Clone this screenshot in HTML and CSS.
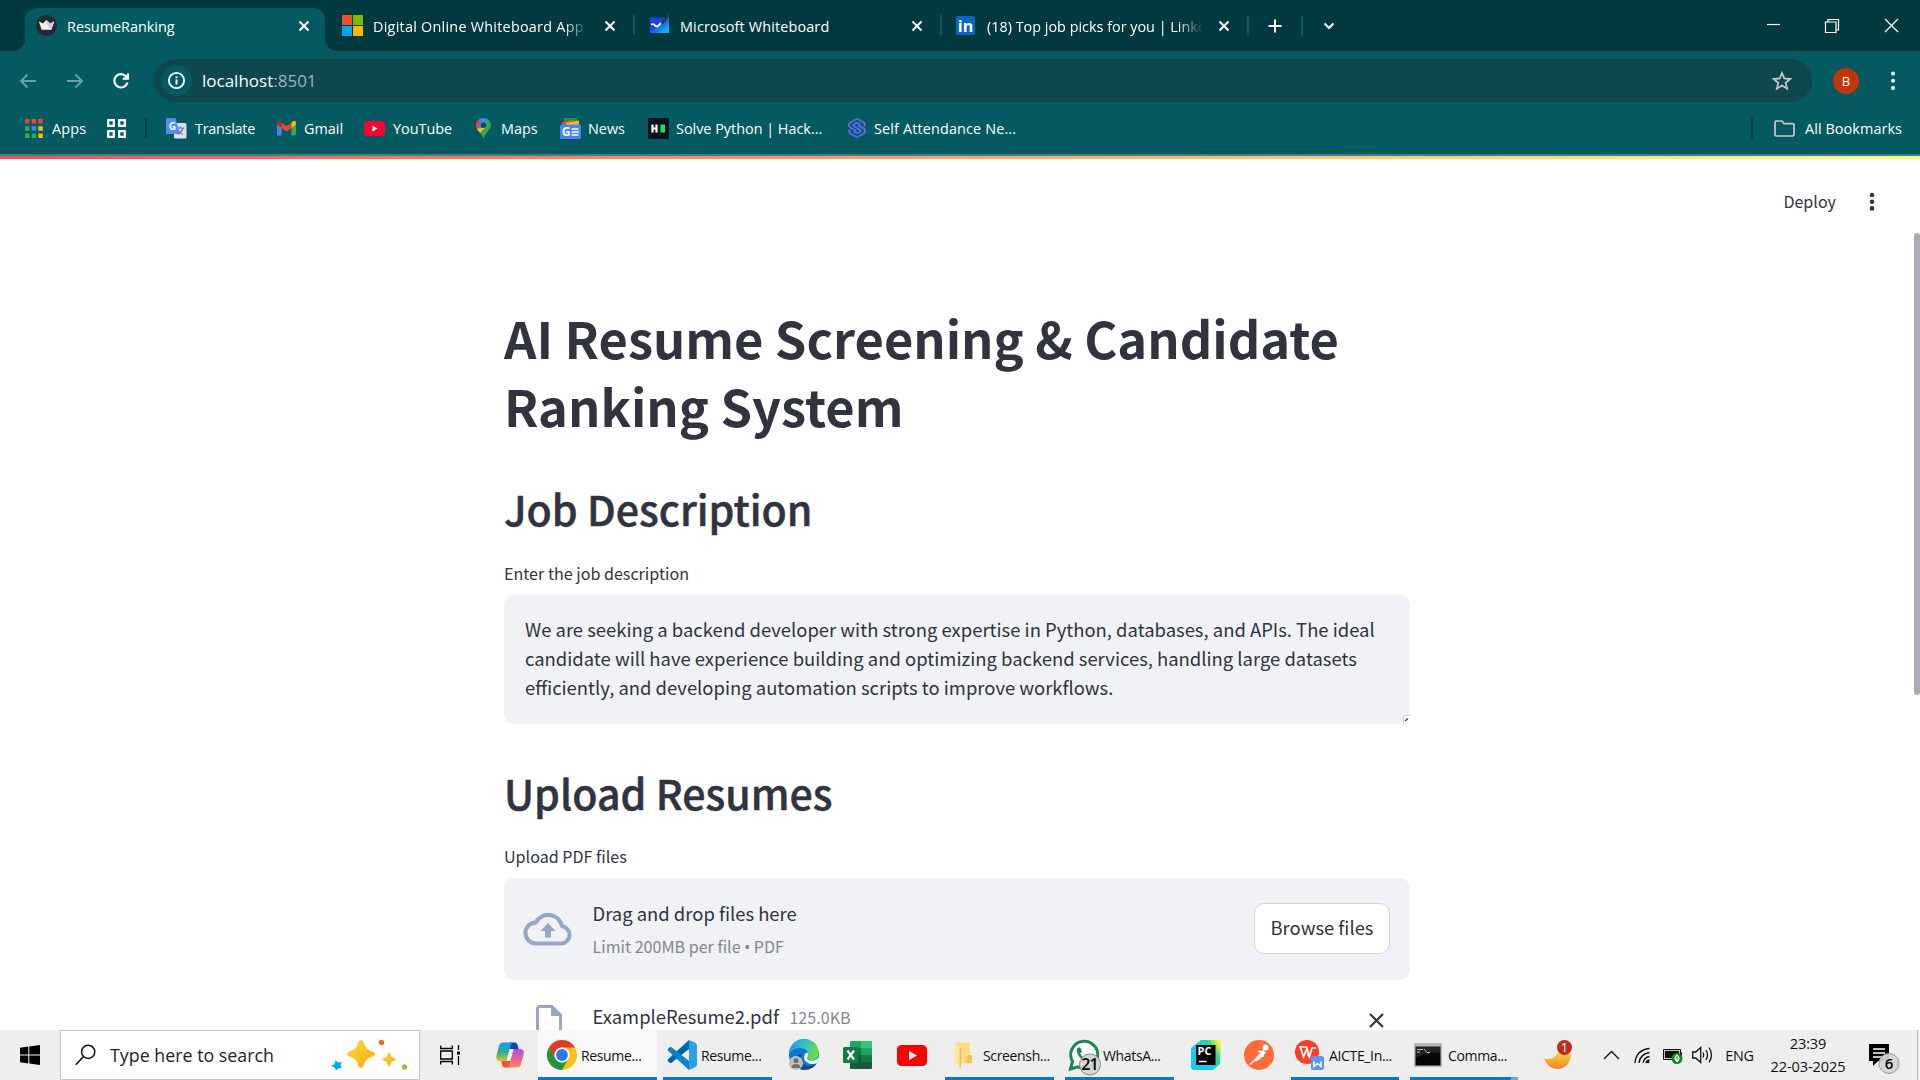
FILE: index.html
```html
<!DOCTYPE html>
<html lang="en">
<head>
<meta charset="utf-8">
<title>ResumeRanking</title>
<link rel="stylesheet" href="styles.css">
</head>
<body>
<div class="screen">

<header class="tabstrip">
  <div class="tab tab-active">
    <svg class="favicon" width="21" height="21" viewBox="0 0 21 21"><circle cx="10.5" cy="10.5" r="10.5" fill="#262730"/><path d="M2.8 6.2 6.8 8.600 10.500 5l3.700 3.600 4-2.400-2.800 8.600H5.600z" fill="#f4f4f4"/><path d="M10.500 5 14.200 8.600 18.200 6.200 15.400 14.800 10.500 9z" fill="#cfcfd2"/></svg>
    <span class="tab-title">ResumeRanking</span>
    <svg class="tab-close" width="12" height="12" viewBox="0 0 12 12"><path d="M1.5 1.5l9 9M10.5 1.5l-9 9"/></svg>
  </div>
  <div class="tab">
    <svg class="favicon" width="21" height="21" viewBox="0 0 21 21"><path fill="#f25022" d="M0 0h10v10H0z"/><path fill="#7fba00" d="M11 0h10v10H11z"/><path fill="#00a4ef" d="M0 11h10v10H0z"/><path fill="#ffb900" d="M11 11h10v10H11z"/></svg>
    <span class="tab-title fade fade-app">Digital Online Whiteboard App</span>
    <svg class="tab-close" width="12" height="12" viewBox="0 0 12 12"><path d="M1.5 1.5l9 9M10.5 1.5l-9 9"/></svg>
  </div>
  <div class="tab">
    <svg class="favicon" width="21" height="21" viewBox="0 0 21 21"><defs><linearGradient id="wb" x1="0" y1="0" x2="1" y2="1"><stop offset=".4" stop-color="#0f45f0"/><stop offset=".8" stop-color="#18a8e8"/></linearGradient></defs><path d="M1 2.500h19v15.500H1z" fill="url(#wb)"/><path d="M2 9.500q2.500-1 3.500.500t3 1.500L12 8" fill="none" stroke="#fff" stroke-width="1.800"/><path d="M13 8.500 19.500 0" stroke="#33383c" stroke-width="2.800"/></svg>
    <span class="tab-title tab-wb">Microsoft Whiteboard</span>
    <svg class="tab-close" width="12" height="12" viewBox="0 0 12 12"><path d="M1.5 1.5l9 9M10.5 1.5l-9 9"/></svg>
  </div>
  <div class="tab">
    <svg class="favicon favicon-in" width="21" height="21" viewBox="0 0 21 21"><rect x="1" y="1" width="19" height="19" rx="2" fill="#0a66c2"/><text x="10.500" y="16.500" text-anchor="middle" class="in-logo">in</text></svg>
    <span class="tab-title fade">(18) Top job picks for you | Linke</span>
    <svg class="tab-close" width="12" height="12" viewBox="0 0 12 12"><path d="M1.5 1.5l9 9M10.5 1.5l-9 9"/></svg>
  </div>
  <svg class="new-tab" width="14" height="14" viewBox="0 0 14 14"><path d="M7 .5v13M.5 7h13"/></svg>
  <i class="strip-sep"></i>
  <svg class="tab-search" width="12" height="8" viewBox="0 0 12 8"><path d="M1.500 1.500 6 6l4.500-4.500"/></svg>
  <div class="window-buttons">
    <svg width="15" height="15" viewBox="0 0 15 15"><path d="M1 6.500h13"/></svg>
    <svg width="15" height="15" viewBox="0 0 15 15"><path d="M.5 4h10.500v10.500H.5zM3 4V1.500h10.500V12H11"/></svg>
    <svg width="15" height="15" viewBox="0 0 15 15"><path d="M1 1l13 13M14 1 1 14"/></svg>
  </div>
</header>

<div class="toolbar">
  <svg class="nav dim" width="18" height="16" viewBox="0 0 18 16"><path d="M17 8H2M8.500 1.500 2 8l6.500 6.500"/></svg>
  <svg class="nav dim" width="18" height="16" viewBox="0 0 18 16"><path d="M1 8h15M9.500 1.500 16 8l-6.500 6.500"/></svg>
  <svg class="nav reload" width="18" height="18" viewBox="0 0 18 18"><path d="M15.500 10.500A6.700 6.700 0 1 1 14 4.300l1.500 1.900M16 1.500v5.200h-5.200"/></svg>
  <div class="omnibox">
    <span class="site-info"><svg width="19" height="19" viewBox="0 0 19 19"><circle cx="9.500" cy="9.500" r="7.600"/><path d="M9.500 8.500v5M9.500 5.200v2"/></svg></span>
    <span class="url">localhost<span class="port">:8501</span></span>
    <svg class="star" width="20" height="20" viewBox="0 0 20 20"><path d="M10 2l2.300 5.500 6 .5-4.600 3.900 1.400 5.800L10 14.600l-5.100 3.100 1.400-5.800L1.700 8l6-.5z"/></svg>
  </div>
  <span class="avatar">B</span>
  <svg class="menu-dots" width="6" height="22" viewBox="0 0 6 22"><circle cx="3" cy="3.500" r="2"/><circle cx="3" cy="10.800" r="2"/><circle cx="3" cy="18" r="2"/></svg>
</div>

<nav class="bookmarks">
  <a class="bm bm-apps"><svg width="18" height="19" viewBox="0 0 18 19"><g fill="#ea4335"><path d="M0 0h4.500v4.500H0zM6.700 0h4.500v4.500H6.700zM13.300 0h4.500v4.500h-4.500z"/></g><path fill="#34a853" d="M0 7.200h4.500v4.500H0zM0 14.400h4.500v4.500H0zM6.700 14.400h4.500v4.500H6.700z"/><path fill="#4285f4" d="M6.700 7.200h4.500v4.500H6.700z"/><path fill="#fbbc04" d="M13.300 7.200h4.500v4.500h-4.500zM13.300 14.400h4.500v4.500h-4.500z"/></svg>Apps</a>
  <svg class="bm-grid" width="19" height="19" viewBox="0 0 19 19"><path d="M1.200 1.200h5.600v5.600H1.200zM12.200 1.200h5.600v5.600h-5.600zM1.200 12.200h5.600v5.600H1.200zM12.200 12.200h5.600v5.600h-5.600z"/></svg>
  <i class="bm-sep"></i>
  <a class="bm bm-translate"><svg width="21" height="21" viewBox="0 0 21 21"><rect x="8" y="5" width="12.500" height="15.500" rx="1.500" fill="#dfe3e8"/><path d="M10.500 10h8M14.500 8.500V10M17 10q-1 4-5 6.500M12 12.500q2 3 5 4" stroke="#607d8b" stroke-width="1.200" fill="none"/><path d="M1.500 0h8l4.500 16H1.500Q0 16 0 14.500v-13Q0 0 1.500 0z" fill="#4d8df6"/><text x="6.300" y="11.500" text-anchor="middle" class="g-logo">G</text></svg>Translate</a>
  <a class="bm bm-gmail"><svg width="19" height="16" viewBox="0 0 19 16"><path d="M0 3v11q0 1.500 1.500 1.500h3V6z" fill="#4285f4"/><path d="M19 3v11q0 1.500-1.500 1.500h-3V6z" fill="#34a853"/><path d="M0 3v1.500L4.500 8V2.500L3 1.200Q.500 0 0 3z" fill="#c5221f"/><path d="M4.500 2.500 9.500 6.300l5-3.800V8l-5 3.800-5-3.800z" fill="#ea4335"/><path d="M19 3v1.500L14.500 8V2.500L16 1.200Q18.500 0 19 3z" fill="#fbbc04"/></svg>Gmail</a>
  <a class="bm bm-youtube"><svg width="21" height="15" viewBox="0 0 21 15"><rect width="21" height="15" rx="3.500" fill="#f03"/><path d="M8.500 4.500v6l5-3z" fill="#fff"/></svg>YouTube</a>
  <a class="bm bm-maps"><svg width="15" height="21" viewBox="0 0 15 21"><path d="M7.500 0A7.300 7.300 0 0 0 .2 7.300Q.2 10 2.300 12.500 6.500 17 7.500 20.500q1-3.500 5-8 2.300-2.500 2.300-5.200A7.300 7.300 0 0 0 7.500 0z" fill="#34a853"/><path d="M.2 7.500Q.2 10 2.300 12.500L12.500 2Q10 0 7.500 0A7.300 7.300 0 0 0 .2 7.500z" fill="#4285f4"/><path d="M2 2.600 5.500 5.500.8 10.500Q-1 6 2 2.600z" fill="#ea4335"/><path d="M1 10.400 9.500 9.500 4 14.800Q1.500 12 1 10.400z" fill="#fbbc04"/><circle cx="7.500" cy="7.300" r="2.700" fill="#0b4e60"/></svg>Maps</a>
  <a class="bm bm-news"><svg width="21" height="21" viewBox="0 0 21 21"><path d="M4 0h13v8H4z" fill="#0c9d58"/><path d="M1.500 4 14 1.500 16 8H2.500z" fill="#ea4335"/><path d="M6 5 19 2.500V9H6z" fill="#ffc107"/><rect y="6.500" width="21" height="14.500" rx="1.500" fill="#4285f4"/><text x="6" y="18" text-anchor="middle" class="g-logo g-news">G</text><path d="M11.500 11h7M11.500 14h7.500M11.500 17h7" stroke="#fff" stroke-width="1.600"/></svg>News</a>
  <a class="bm bm-hr"><svg width="21" height="21" viewBox="0 0 21 21"><path d="M0 0h21v21H0z" fill="#0e141e"/><path d="M4.500 6.500v8M8.500 6.500v8M4 10.500h5" stroke="#fff" stroke-width="2.200"/><path d="M12.500 6.500H17v8h-4.500z" fill="#1be05f"/></svg>Solve Python | Hack...</a>
  <a class="bm bm-self"><svg width="18" height="20" viewBox="0 0 18 20"><g fill="none" stroke="#5b66e8" stroke-width="2"><path d="M15.800 8.500Q18 6 15.300 4.200L10.500 1.500q-1.500-.9-3 0L2.700 4.300Q0 6 1.200 8.200 1.700 9 3 9.800l5 3"/><path d="M2.200 11.500Q0 14 2.700 15.800l4.800 2.700q1.500.9 3 0l4.800-2.800q2.700-1.700 1.500-3.900-.5-.8-1.800-1.600l-5-3"/><path d="M12.500 6.800 9.800 5q-.8-.5-1.600 0L6 6.300q-1.300.9 0 1.800l6 3.800q1.300.9 0 1.800L9.800 15q-.8.500-1.600 0l-2.700-1.800"/></g></svg>Self Attendance Ne...</a>
  <i class="bm-sep bm-sep-end"></i>
  <a class="bm bm-all"><svg width="21" height="17" viewBox="0 0 21 17"><path d="M1 14.500v-12Q1 1 2.500 1H8l2.200 2.700h8.300Q20 3.700 20 5v9.500q0 1.500-1.500 1.500h-16Q1 16 1 14.500z" fill="none" stroke="#c9cdd0" stroke-width="1.700"/></svg>All Bookmarks</a>
</nav>

<main class="app">
  <div class="decoration"></div>
  <div class="app-header"><span>Deploy</span><svg width="6" height="20" viewBox="0 0 6 20"><circle cx="3" cy="3" r="2.300"/><circle cx="3" cy="9.700" r="2.300"/><circle cx="3" cy="16.400" r="2.300"/></svg></div>
  <div class="app-body">
    <section class="content">
      <h1>AI Resume Screening &amp; Candidate<br>Ranking System</h1>
      <h2>Job Description</h2>
      <p class="label">Enter the job description</p>
      <div class="textarea">We are seeking a backend developer with strong expertise in Python, databases, and APIs. The ideal<br>candidate will have experience building and optimizing backend services, handling large datasets<br>efficiently, and developing automation scripts to improve workflows.<svg class="grip" width="7" height="8" viewBox="0 0 7 8"><path d="M0 0h7v4L4 8H0z" fill="#fff"/><path d="M.5 8V.5H7" fill="none" stroke="#d3d4d8"/><path d="M2 6 5 3.500" stroke="#444" stroke-width="1.500"/></svg></div>
      <h2>Upload Resumes</h2>
      <p class="label label-upload">Upload PDF files</p>
      <div class="dropzone">
        <svg class="cloud" width="48" height="34" viewBox="0 0 48 34"><path d="M38 14.200A14 14 0 0 0 11.800 10.500 10.500 10.500 0 0 0 12 31.500h25.500a8.700 8.700 0 0 0 .5-17.300z" fill="none" stroke="#97a6c6" stroke-width="4" stroke-linejoin="round"/><path d="M24 11 31.500 19H27v6.500h-6V19h-4.500z" fill="#97a6c6"/></svg>
        <div class="drop-text"><div>Drag and drop files here</div><small>Limit 200MB per file <b>•</b> PDF</small></div>
        <span class="browse">Browse files</span>
      </div>
      <div class="file">
        <svg class="file-icon" width="26" height="32" viewBox="0 0 26 32"><path d="M1.500 30V4Q1.500 1.500 4 1.500h12L24.500 10v20" fill="none" stroke="#97a6c6" stroke-width="3"/><path d="M15 1v10h10V9L17 1z" fill="#97a6c6"/></svg>
        <span class="file-name">ExampleResume2.pdf</span><small>125.0KB</small>
        <svg class="file-x" width="17" height="17" viewBox="0 0 17 17"><path d="M2 2l13 13M15 2 2 15"/></svg>
      </div>
    </section>
    <div class="scrollbar"></div>
  </div>
</main>

<footer class="taskbar">
  <div class="cell"><svg width="20" height="20" viewBox="0 0 20 20"><path d="M0 2.800 8.300 1.600v7.900H0zM9.300 1.500 20 0v9.500H9.300zM0 10.500h8.300v7.900L0 17.200zM9.300 10.500H20V20L9.300 18.500z"/></svg></div>
  <div class="search">
    <svg width="21" height="22" viewBox="0 0 21 22"><circle cx="13.200" cy="7.800" r="6.600" fill="none" stroke="#111" stroke-width="1.500"/><path d="M8.500 12.500 .8 20.800" stroke="#111" stroke-width="1.600"/></svg>
    <span>Type here to search</span>
    <svg class="sparkles" width="76" height="32" viewBox="0 0 76 32"><defs><linearGradient id="gold" x1="0" y1="0" x2="1" y2="1"><stop offset="0" stop-color="#ffd83a"/><stop offset="1" stop-color="#f5ac12"/></linearGradient></defs><path d="M30 1q2.500 0 4 6 1.500 3.500 5 4.500 5 1.700 5 3.500t-5 3.500q-3.500 1-5 4.500-1.500 6-4 6t-4-6q-1.500-3.500-5-4.500-5-1.700-5-3.500t5-3.500q3.500-1 5-4.500 1.500-6 4-6z" fill="url(#gold)"/><path d="M58 13q2 1 2.500 5 3.500 1 4.500 2.500-1 1.500-4.500 2-1 3.500-2.500 5-1.500-1.500-2.300-5-3.700-.5-4.700-2 1-1.500 4.700-2.500Q56.500 14 58 13z" fill="url(#gold)"/><path d="M4.500 21l2.500 2.500 3.500-.5-1 3.500 1 2.500-3.500.5-2 2-1.500-3-3.500-1.500 3.500-2z" fill="#00a9ea"/><circle cx="50.500" cy="3.500" r="2.700" fill="#f26522"/><circle cx="73.500" cy="28" r="2.700" fill="#8cc63f"/></svg>
  </div>
  <div class="cell"><svg width="20" height="20" viewBox="0 0 20 20"><path d="M.7.500V3.500h11.600V.500M.7 19.500v-3h11.600v3M.7 6h11.600v8H.7zM18.500 0v5M18.500 11v9" fill="none" stroke="#000" stroke-width="1.300"/><path d="M17 6.500h3v3h-3z"/></svg></div>
  <div class="cell copilot"><svg width="28" height="26" viewBox="0 0 28 26"><defs><linearGradient id="cpa" x1="0" y1="0" x2="0" y2="1"><stop offset="0" stop-color="#1a9be8"/><stop offset=".5" stop-color="#1faf9a"/><stop offset="1" stop-color="#e3c323"/></linearGradient><linearGradient id="cpb" x1="0" y1="0" x2="0" y2="1"><stop offset="0" stop-color="#a64fe0"/><stop offset=".5" stop-color="#ee5da0"/><stop offset="1" stop-color="#f98b55"/></linearGradient></defs><path d="M13 .5h6q2 0 3 4l.8 2.500h-9z" fill="#1443b8"/><path d="M14 25.500H9q-2.500 0-3.200-4L5 19h10z" fill="#f2562e"/><path d="M6.500.500h11q-2 0-3 3.500L10.300 19H4Q-.5 19 .3 14L3 4Q4 .5 6.500.5z" fill="url(#cpa)"/><path d="M21.500 25.500h-11q2 0 3-3.500L17.700 7H24q4.500 0 3.700 5L25 22q-1 3.500-3.500 3.500z" fill="url(#cpb)"/></svg></div>
  <div class="app-btn active"><svg width="30" height="30" viewBox="0 0 30 30"><circle cx="15" cy="15" r="15" fill="#fbc116"/><path d="M2 7.500A15 15 0 0 1 28 7.500H15A7.500 7.500 0 0 0 8.500 18.800z" fill="#dd3b2e"/><path d="M2 7.500A15 15 0 0 0 15 30l6.500-11.200A7.500 7.500 0 0 1 8.500 18.800z" fill="#229344"/><circle cx="15" cy="15" r="7.500" fill="#fff"/><circle cx="15" cy="15" r="5.900" fill="#2b78f0"/></svg><span>Resume...</span></div>
  <div class="app-btn vs"><svg width="30" height="30" viewBox="0 0 30 30"><path d="M22 0 1 19.200q-1 1 0 2l1.600 1.500q1 .8 2 0L22 9z" fill="#0065a9"/><path d="M22 30 1 10.800q-1-1 0-2l1.600-1.500q1-.8 2 0L22 21z" fill="#0e7fc9"/><path d="M22 0l6.500 3Q30 4 30 5.500v19q0 1.500-1.500 2.500L22 30q-1-1 0-2z" fill="#27a3ee"/></svg><span>Resume...</span></div>
  <div class="cell"><svg width="30" height="30" viewBox="0 0 30 30"><defs><linearGradient id="edge" x1="0" y1="0" x2="1" y2=".3"><stop offset="0" stop-color="#1f8ce0"/><stop offset=".5" stop-color="#2cc0d3"/><stop offset="1" stop-color="#67db4c"/></linearGradient></defs><circle cx="15" cy="15" r="15" fill="#1374cf"/><path d="M0 14.500A15 15 0 0 1 30 13q0 6-6 7-5 .7-5.500-2 2-2 .5-5.500Q16.500 7.500 9.500 8 2.500 8.600 0 14.500z" fill="url(#edge)"/><path d="M12 14q-2.500 9 6 12 5 1 10-3-4 7-13 7Q6 29 6 21q.5-5.500 6-7z" fill="#114a8c"/><path d="M15 16.500q1-5 4-3.500 1.200 3-.8 5 .3 3 5.800 2.500 4-.5 6.500-3.500 0 3-1.500 5.500-5 2.500-9 1Q14.500 21.500 15 16.500z" fill="#ededed"/><circle cx="7" cy="23" r="7" fill="#bfc0c1"/><circle cx="7" cy="20.500" r="2.600" fill="#6e7072"/><path d="M2.500 28q0-4 4.500-4t4.500 4z" fill="#6e7072"/></svg></div>
  <div class="cell excel"><svg width="29" height="28" viewBox="0 0 29 28"><rect x="7" width="22" height="28" rx="1.500" fill="#21a366"/><path d="M7 7h11v14H7z" fill="#107c41"/><path d="M18 0h9.500Q29 0 29 1.500V7H18z" fill="#33c481"/><path d="M7 14h11v7H7z" fill="#185c37"/><path d="M7 21h22v5.500q0 1.500-1.500 1.500h-19Q7 28 7 26.500z" fill="#185c37"/><path d="M18 14h11v7H18z" fill="#107c41"/><rect y="6" width="15.500" height="16" rx="1.500" fill="#107c41"/><path d="M4.500 9.500l6.500 9M11 9.500l-6.500 9" stroke="#fff" stroke-width="2.200"/></svg></div>
  <div class="cell"><svg width="30" height="21" viewBox="0 0 30 21"><rect width="30" height="21" rx="4.500" fill="#f00"/><path d="M12 6v9l8-4.500z" fill="#fff"/></svg></div>
  <div class="app-btn explorer"><svg width="20" height="28" viewBox="0 0 20 28"><path d="M2 1.500h14v21H2z" fill="#fbdc85"/><path d="M14 14h4v8h-6z" fill="#eec35d"/><path d="M0 1 6.500 7v20L0 22z" fill="#ffe9a5"/><path d="M5.500 7 7 6v20l-1.500 1.500z" fill="#eac25f"/></svg><span>Screensh...</span></div>
  <div class="app-btn whatsapp"><svg width="34" height="36" viewBox="0 0 34 36"><path d="M1.500 29l2-7.500A13.500 13.500 0 1 1 9 26.800z" fill="#fff" stroke="#1b8755" stroke-width="3"/><path d="M8 9q1.500-3 3.500-1l1.300 3.300q0 1-1.600 2.200 2.300 4.500 6.500 5.500 2-2.500 3-2l3 1.600q.7 3-3 4Q17 23.500 11.500 18 6.700 13 8 9z" fill="#1b8755"/><circle cx="21" cy="24.500" r="10.500" fill="#d6d6d6" fill-opacity=".93" stroke="#858585"/><text x="20.500" y="30" text-anchor="middle" class="badge-21">21</text></svg><span>WhatsA...</span></div>
  <div class="cell"><svg width="30" height="30" viewBox="0 0 30 30"><defs><linearGradient id="pc" x1="0" y1=".6" x2="1" y2="0"><stop offset=".3" stop-color="#12cdf5"/><stop offset=".65" stop-color="#25d79b"/><stop offset=".9" stop-color="#f5ee35"/></linearGradient></defs><path d="M10 0 28 0 30 2 29 24 22 30H2L0 28V8z" fill="url(#pc)"/><path d="M5 5h19.500v20H5z" fill="#000"/><path d="M8 21.500h7.500" stroke="#fff" stroke-width="1.500"/><text x="13.500" y="14.500" text-anchor="middle" class="pc-logo">PC</text></svg></div>
  <div class="cell postman"><svg width="30" height="30" viewBox="0 0 30 30"><circle cx="15" cy="15" r="15" fill="#ff6c37"/><circle cx="21.500" cy="7.500" r="3" fill="#fff"/><path d="M19 10l3 2.500L15 20l-4.500 1.500 1-3.500z" fill="#fff"/><path d="M12 19l-6 5.500M14 11.500h5M20 12l-1.500 5" stroke="#fff" stroke-width="1.500"/></svg></div>
  <div class="app-btn wps"><svg width="30" height="30" viewBox="0 0 30 30"><circle cx="12" cy="12" r="12" fill="#fc3f22"/><path d="M4 7h7.500l3 9.500L17 8h4M5.500 7.500 8.500 17l3-7.500M14 17l-1.500-4" fill="none" stroke="#fff" stroke-width="1.700"/><rect x="16" y="16" width="13" height="14" rx="2.500" fill="#5a93fa"/><path d="M19 21.500v5l3.500-3 3.500 3v-5" fill="none" stroke="#fff" stroke-width="1.600"/></svg><span>AICTE_In...</span></div>
  <div class="app-btn cmd"><svg width="28" height="24" viewBox="0 0 28 24"><rect width="28" height="24" rx="1" fill="#b3bac2"/><path d="M1.500 3.500h25v19h-25z" fill="#070707"/><path d="M3 6.500h6M3 9h3M10 6l3 3.500h3" fill="none" stroke="#bbb" stroke-width="1"/><path d="M1.500 3.500h25v6q-14 0-25 5z" fill="#fff" fill-opacity=".12"/></svg><span>Comma...</span></div>
  <div class="cell"><svg width="30" height="30" viewBox="0 0 30 30"><defs><linearGradient id="moon" x1="0" y1="0" x2="0" y2="1"><stop offset=".4" stop-color="#fbc53c"/><stop offset="1" stop-color="#ef8220"/></linearGradient></defs><path d="M1 18.500q7 2 12-3 3.500-4 3-9 4-1 7 1 6 4 4.500 11-2.500 9-12 10.500Q5 29.500 1 18.500z" fill="url(#moon)"/><circle cx="21.500" cy="7.500" r="7.500" fill="#c42b1c"/><text x="21.500" y="12.300" text-anchor="middle" class="badge-1">1</text></svg></div>
  <div class="cell"><svg width="17" height="10" viewBox="0 0 17 10"><path d="M1 9l7.500-7.500L16 9" class="tray"/></svg></div>
  <div class="cell wifi"><svg width="17" height="17" viewBox="0 0 17 17"><path d="M1 16Q2 3 15.500 1.500M5 16Q6 7 15.500 5.500M9 16q1-5.500 6.500-6.500" class="tray"/><path d="M12 16q.5-2.500 3.500-3" class="tray"/><circle cx="14" cy="15" r="1.300"/></svg></div>
  <div class="cell battery"><svg width="20" height="18" viewBox="0 0 20 18"><path d="M1 4h16v9H1z" fill="#111" stroke="#fff" stroke-width="1.500"/><path d="M.5 3.500h17v10H.5zM18.500 6.500v4" fill="none" stroke="#111"/><circle cx="14" cy="12.500" r="5.500" fill="#108a1e"/><path d="M14 9q-4 3.500 0 6.500 4-3 0-6.500zM14 11.500v4.500" fill="none" stroke="#fff" stroke-width="1.200"/></svg></div>
  <div class="cell volume"><svg width="21" height="18" viewBox="0 0 21 18"><path d="M.7 6h3l5-4.500v15l-5-4.500h-3zM11 6.500q1.500 2.500 0 5M14 4q3 5 0 10M17 1.500q5 7.500 0 15" class="tray"/></svg></div>
  <div class="cell lang">ENG</div>
  <div class="clock"><span>23:39</span><span>22-03-2025</span></div>
  <div class="cell notif"><svg width="31" height="31" viewBox="0 0 31 31"><path d="M0 0h20v17H9l-5 5v-5H0z"/><path d="M4 5h12M4 9h12M4 13h12" stroke="#fff" stroke-width="1.300"/><circle cx="20" cy="19.500" r="10" fill="#d4d4d4" fill-opacity=".94" stroke="#999"/><text x="20" y="25" text-anchor="middle" class="badge-6">6</text></svg></div>
  <div class="show-desktop"></div>
</footer>
</div>
</body>
</html>
```
FILE: styles.css
```css
* { box-sizing: border-box; }
body { margin: 0; font-family: "Open Sans", sans-serif; }
svg { display: block; flex: none; overflow: visible; }
.screen { width: 1920px; height: 1080px; display: flex; flex-direction: column; overflow: hidden; background: #fff; }

/* Tab strip */
.tabstrip { height: 51px; flex: none; display: flex; align-items: center; background: #02393e; color: #fff; font-size: 14.4px; padding-left: 25px; }
.tab { position: relative; width: 307px; height: 51px; display: flex; align-items: center; padding: 0 23px 0 10px; }
.tab-active { width: 300px; height: 43px; align-self: flex-end; padding: 0 15px 8px 11px; margin-right: 7px; background: #045a60; border-radius: 12px 12px 0 0; }
.tab-active::before, .tab-active::after { content: ""; position: absolute; bottom: 0; width: 12px; height: 12px; }
.tab-active::before { left: -12px; background: radial-gradient(circle at 0 0, transparent 11.5px, #045a60 12.5px); }
.tab-active::after { right: -12px; background: radial-gradient(circle at 100% 0, transparent 11.5px, #045a60 12.5px); }
.tab:not(.tab-active)::after { content: ""; position: absolute; right: 4px; top: 15px; width: 2px; height: 20px; background: #045a60; }
.tab-title { flex: 1; min-width: 0; margin: 1px 0 0 10px; white-space: nowrap; }
.tab-wb { letter-spacing: .15px; }
.fade { margin-right: 15px; -webkit-mask-image: linear-gradient(90deg, #000 190px, transparent 216px); mask-image: linear-gradient(90deg, #000 190px, transparent 216px); }
.fade-app { letter-spacing: .25px; }
.favicon-in { margin-left: -1px; margin-right: 1px; }
.tab-close path { fill: none; stroke: #fff; stroke-width: 2; }
.new-tab { margin-left: 15px; }
.new-tab path, .tab-search path { fill: none; stroke: #fff; stroke-width: 2; }
.strip-sep { width: 2px; height: 20px; margin-left: 19px; background: #045a60; }
.tab-search { margin-left: 20px; }
.window-buttons { margin-left: auto; display: flex; gap: 44px; padding-right: 21px; }
.window-buttons path { fill: none; stroke: #fff; stroke-width: 1.2; }
.in-logo { font: 700 16px "Open Sans", sans-serif; fill: #fff; }

/* Toolbar */
.toolbar { height: 59px; flex: none; display: flex; align-items: center; background: #045a60; padding: 0 24px 0 19px; }
.nav { margin-right: 29px; }
.nav path { fill: none; stroke: #fff; stroke-width: 1.8; }
.dim path { stroke: #6fa0a4; }
.reload { margin: 0 24px 0 -1px; }
.reload path { stroke-width: 2.2; }
.omnibox { width: 1658px; height: 43px; display: flex; align-items: center; border-radius: 22px; background: #0e484e; padding: 0 20px 0 7px; }
.site-info { width: 31px; height: 31px; display: flex; align-items: center; justify-content: center; border-radius: 50%; background: #045a60; }
.site-info circle, .site-info path { fill: none; stroke: #fff; stroke-width: 1.9; }
.url { margin-left: 10px; font-size: 17px; color: #fff; flex: 1; }
.port { color: #9db3b5; }
.star path { fill: none; stroke: #c3c7c8; stroke-width: 1.8; }
.avatar { width: 26px; height: 26px; margin-left: 21px; border-radius: 50%; background: #bf360c; color: #fff; font-size: 13px; line-height: 26px; text-align: center; }
.menu-dots { margin-left: auto; fill: #fff; }

/* Bookmarks */
.bookmarks { height: 46px; flex: none; display: flex; align-items: center; background: #045a60; border-bottom: 2px solid #3d8086; color: #fff; font-size: 14.4px; padding: 0 18px 8px 25px; }
.bm { display: flex; align-items: center; gap: 8px; white-space: nowrap; }
.bm-apps { width: 82px; gap: 9px; letter-spacing: .2px; }
.bm-grid path { fill: none; stroke: #fff; stroke-width: 2.2; }
.bm-sep { width: 2px; height: 20px; margin: 0 19px; background: #02393e; }
.bm-translate { width: 111px; letter-spacing: -.25px; }
.bm-gmail { width: 87px; }
.bm-youtube { width: 112px; }
.bm-maps { width: 84px; gap: 10px; }
.bm-news { width: 88px; gap: 7px; }
.bm-hr { width: 200px; gap: 7px; }
.bm-self { width: auto; letter-spacing: .15px; }
.bm-sep-end { margin: 0 21px 0 auto; }
.bm-all { width: auto; gap: 10px; letter-spacing: .08px; }
.g-logo { font: 700 10px "Open Sans", sans-serif; fill: #fff; }
.g-news { font-size: 12px; }

/* Application page */
.app { height: 874px; flex: none; overflow: hidden; background: #fff; color: #31333f; font-family: "Noto Sans CJK SC", sans-serif; }
.decoration { height: 3px; background: linear-gradient(90deg, #ff4b4b, #fffd80); }
.app-header { height: 74px; display: flex; align-items: center; justify-content: flex-end; gap: 33px; padding-right: 45px; font-size: 16.1px; }
.app-header span { margin-top: 10px; }
.app-header svg { margin-top: 12px; fill: #31333f; }
.app-body { display: flex; justify-content: space-between; padding-left: 504px; }
.content { width: 906px; padding-top: 70px; }
.scrollbar { width: 6px; height: 462px; border-radius: 3px; background: #acadb2; }
h1 { margin: 0 0 42px; font-size: 50.6px; line-height: 68px; font-weight: 700; white-space: nowrap; }
h2 { margin: 0; font-size: 41.1px; line-height: 54px; font-weight: 500; -webkit-text-stroke: .5px #31333f; white-space: nowrap; }
.label { margin: 24px 0 8px; font-size: 16.1px; line-height: 28px; }
.label-upload { margin-top: 23px; }
.textarea { position: relative; height: 128.5px; margin-bottom: 41.5px; padding: 20px 21px; border-radius: 10px; background: #f0f2f6; font-size: 18.45px; line-height: 29.1px; white-space: nowrap; }
.grip { position: absolute; right: 0; bottom: 1px; }
.dropzone { height: 102px; display: flex; align-items: center; border-radius: 10px; background: #f0f2f6; padding: 0 20px 2px 20px; }
.cloud { margin-top: 1px; }
.drop-text { margin-left: 20.5px; flex: 1; font-size: 18.43px; line-height: 30px; }
.drop-text small { display: block; margin: 5px 0 -1px; line-height: 26px; }
small { font-size: 16.1px; color: #85868f; }
small b { font: 400 16px "Noto Sans", sans-serif; }
.browse { width: 136px; height: 51px; border: 1px solid #d3d4d8; border-radius: 10px; background: #fff; font-size: 18.43px; line-height: 47px; text-align: center; }
.file { display: flex; align-items: flex-start; padding: 21px 25px 0 32px; font-size: 18.43px; line-height: 30px; white-space: nowrap; }
.file-icon { margin-top: 4px; }
.file-name { margin: 0 10.500px 0 30.500px; }
.file small { line-height: 32px; }
.file-x { margin: 11px 0 0 auto; }
.file-x path { stroke: #31333f; stroke-width: 2.2; }

/* Taskbar */
.taskbar { height: 50px; flex: none; display: grid; grid-template-columns: 60px 360px 60px 58px 119px 120px 54px 54px 54px 121px 119px 54px 53px 119px 113px 80px 26px 36px 34px 26px 44px 88px 65px 5px; background: #eee; color: #111; font-size: 14px; }
.cell { display: flex; align-items: center; justify-content: center; }
.search { display: flex; align-items: center; border: 1px solid #c8c8c8; background: #fff; padding: 0 12px 0 14px; font-size: 17.8px; color: #222; }
.search span { margin-left: 14px; flex: 1; letter-spacing: .02px; }
.copilot { padding-left: 2px; }
.app-btn { display: flex; align-items: center; border-bottom: 3px solid #0078d7; padding: 3px 0 0 9px; white-space: nowrap; letter-spacing: -.35px; }
.app-btn span { margin-left: 4px; }
.active { background: #f8f8f8; }
.vs { margin: 0 5px 0 6px; padding-left: 4px; }
.excel { padding-right: 1px; }
.explorer { margin: 0 6px; }
.explorer span { margin-left: 9px; }
.whatsapp { margin: 0 5px; padding-left: 4px; }
.whatsapp svg { margin-top: 5px; }
.whatsapp span { margin-left: 0; }
.postman svg { margin-right: 1px; }
.wps { margin: 0 6px 0 5px; padding-left: 4px; }
.cmd { margin-left: 5px; padding-left: 4px; border-image: linear-gradient(90deg, #0078d7 98px, #62aae6 98px) 3; }
.cmd span { margin-left: 6px; }
.tray { fill: none; stroke: #111; stroke-width: 1.3; }
.battery { padding-right: 8px; }
.volume { padding-right: 10px; }
.badge-21 { font: 600 16px "Open Sans", sans-serif; letter-spacing: -1px; }
.badge-1 { font: 13px "Open Sans", sans-serif; fill: #fff; }
.badge-6 { font: 600 15px "Open Sans", sans-serif; }
.pc-logo { font: 700 11px "Open Sans", sans-serif; fill: #fff; }
.lang { font-size: 14.4px; padding-right: 5px; letter-spacing: -.3px; }
.clock { display: flex; flex-direction: column; align-items: center; justify-content: center; line-height: 23px; font-size: 14.6px; letter-spacing: -.1px; }
.notif svg { margin-top: 8px; }
.show-desktop { border-left: 1px solid #b5b5b5; }
```
